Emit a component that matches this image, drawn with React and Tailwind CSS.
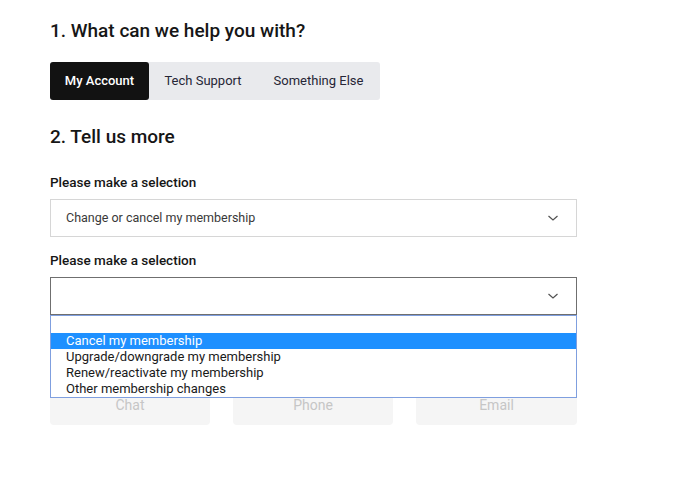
import React from "react";

function Chevron() {
  return (
    <svg width="12" height="8" viewBox="0 0 12 8" fill="none">
      <path d="M1.5 2 L6 6 L10.5 2" stroke="#525252" strokeWidth="1.2" />
    </svg>
  );
}

export default function App() {
  const font = { fontFamily: "Roboto, 'Liberation Sans', sans-serif" };
  return (
    <div className="w-[700px] h-[489px] overflow-hidden bg-white text-[#161616]" style={font}>
      <div className="pl-[50px] pt-[18px] w-[577px]">
        <h1 className="text-[19px] leading-[26px] font-medium">1. What can we help you with?</h1>
        <div className="mt-[18px] flex h-[38px] w-[330px] rounded-[3px] bg-[#e9eaed] text-[13px]">
          <div className="flex items-center justify-center w-[99px] rounded-[3px] bg-[#121212] text-white font-medium">My Account</div>
          <div className="flex items-center justify-center w-[108px] text-[#262636]">Tech Support</div>
          <div className="flex items-center justify-center w-[123px] text-[#262636]">Something Else</div>
        </div>
        <h2 className="mt-[24px] text-[19px] leading-[26px] font-medium">2. Tell us more</h2>
        <div className="mt-[23px] text-[13.5px] leading-[18px] font-medium">Please make a selection</div>
        <div className="mt-[8px] flex h-[38px] w-[527px] items-center justify-between border border-[#d6d6d6] pl-[15px] pr-[17px] text-[12.5px] text-[#393939]">
          <span>Change or cancel my membership</span>
          <Chevron />
        </div>
        <div className="mt-[14px] text-[13.5px] leading-[18px] font-medium">Please make a selection</div>
        <div className="relative mt-[8px]">
          <div className="flex h-[38px] w-[527px] items-center justify-end border border-[#6f6f6f] pr-[17px]">
            <Chevron />
          </div>
          <div className="absolute left-0 top-[38px] z-10 w-[527px] border border-[#7f9fdf] bg-white text-[13px] leading-[16px] text-[#1a1a1a]">
            <div className="h-[17px]"></div>
            <div className="h-[16px] bg-[#1e90ff] pl-[15px] text-white">Cancel my membership</div>
            <div className="h-[16px] pl-[15px]">Upgrade/downgrade my membership</div>
            <div className="h-[16px] pl-[15px]">Renew/reactivate my membership</div>
            <div className="h-[16px] pl-[15px]">Other membership changes</div>
          </div>
          <div className="mt-[70px] flex gap-[23px]">
            <div className="flex h-[40px] w-[160px] items-center justify-center rounded-[4px] bg-[#f5f5f5] text-[14px] text-[#c6c6c6]">Chat</div>
            <div className="flex h-[40px] w-[160px] items-center justify-center rounded-[4px] bg-[#f5f5f5] text-[14px] text-[#c6c6c6]">Phone</div>
            <div className="flex h-[40px] w-[161px] items-center justify-center rounded-[4px] bg-[#f5f5f5] text-[14px] text-[#c6c6c6]">Email</div>
          </div>
        </div>
      </div>
    </div>
  );
}
